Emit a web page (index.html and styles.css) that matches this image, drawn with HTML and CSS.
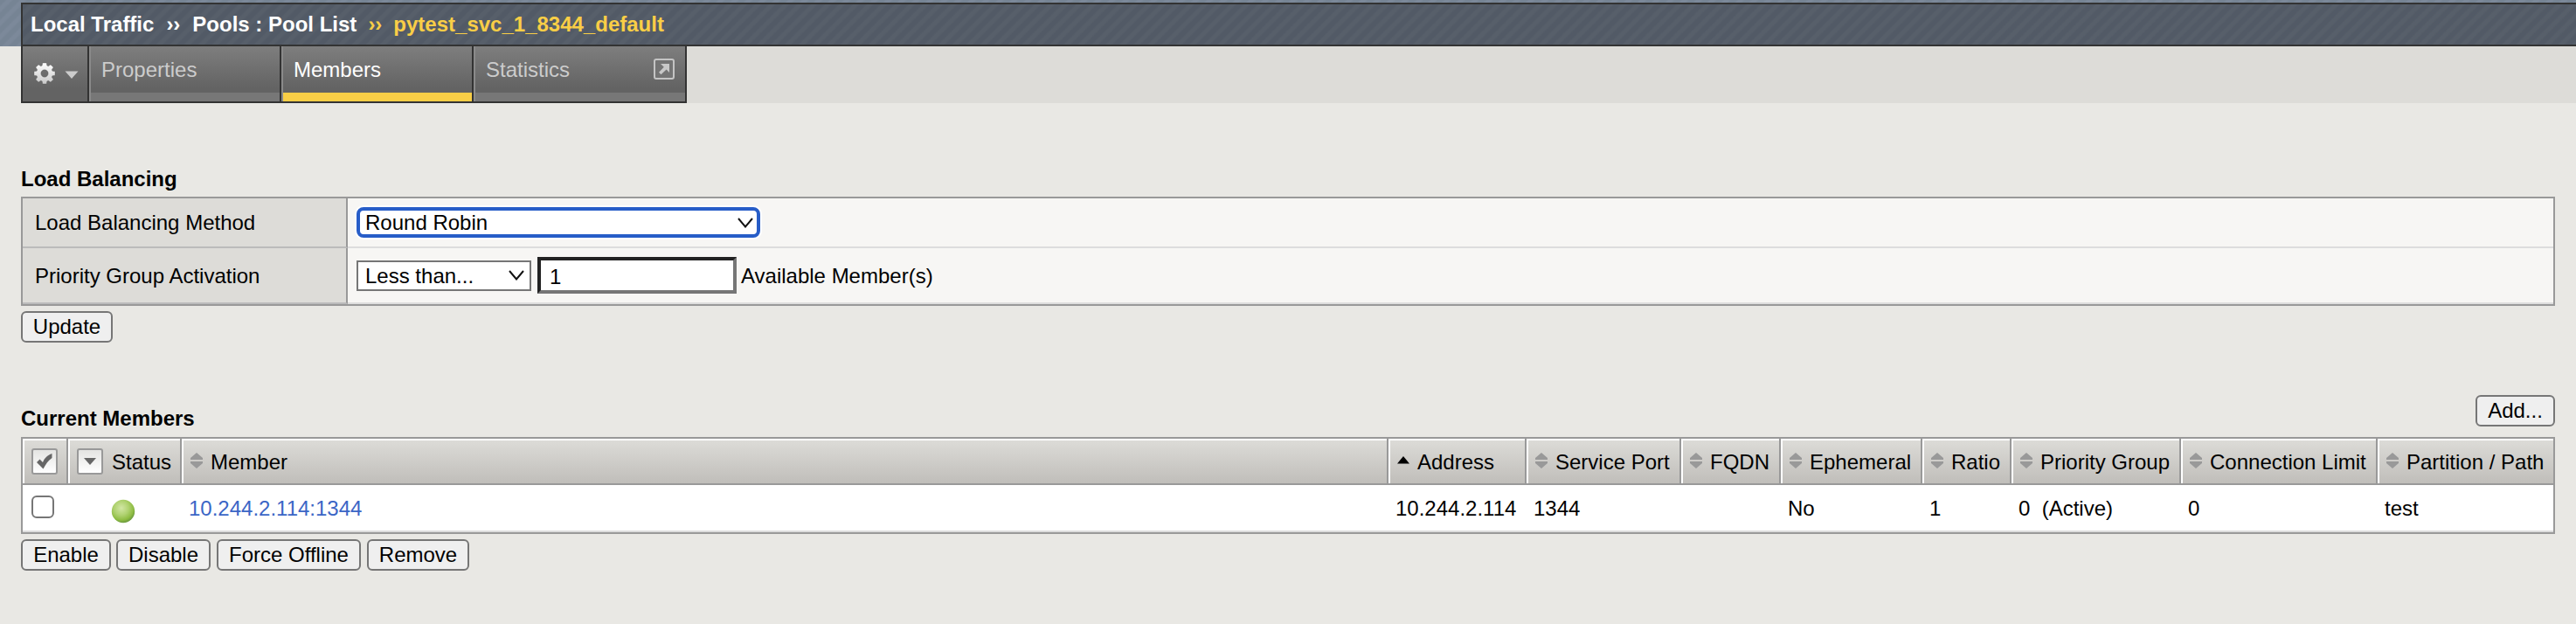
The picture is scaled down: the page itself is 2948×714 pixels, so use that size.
FILE: index.html
```html
<!DOCTYPE html>
<html lang="en">
<head>
<meta charset="utf-8">
<title>Pool Members</title>
<link rel="stylesheet" href="styles.css">
</head>
<body>
<svg width="0" height="0" class="defs" aria-hidden="true">
  <defs>
    <linearGradient id="gearFill" x1="0" y1="0" x2="0" y2="1"><stop offset="0" stop-color="#fff"/><stop offset="1" stop-color="#c8c8c8"/></linearGradient>
    <radialGradient id="ball" cx=".42" cy=".36" r=".62"><stop offset="0" stop-color="#d2e6a4"/><stop offset=".5" stop-color="#b0d271"/><stop offset=".85" stop-color="#8ebc42"/><stop offset="1" stop-color="#72a040"/></radialGradient>
    <symbol id="sort" viewBox="0 0 14 18"><path d="M7 0L14 6V8H0V6ZM0 10H14V12L7 18L0 12Z" fill="#999"/></symbol>
  </defs>
</svg>
<header class="top">
  <div class="crumbs">
    <span>Local Traffic</span><span class="sep">››</span><span>Pools : Pool List</span><span class="sep gold sep2">››</span><span class="gold">pytest_svc_1_8344_default</span>
  </div>
</header>
<nav class="menu">
  <div class="tab gear">
    <svg width="28" height="28" viewBox="-14 -14 28 28"><g fill="url(#gearFill)" stroke="#555" stroke-opacity=".5" stroke-width=".6"><path fill-rule="evenodd" d="M-2.2-12H2.2L2.8-8.9L4.3-8.3L6.9-10.1L10.1-6.9L8.3-4.3L8.9-2.8L12-2.2V2.2L8.9 2.8L8.3 4.3L10.1 6.9L6.9 10.1L4.3 8.3L2.8 8.9L2.2 12H-2.2L-2.8 8.9L-4.3 8.3L-6.9 10.1L-10.1 6.9L-8.3 4.3L-8.9 2.8L-12 2.2V-2.2L-8.9-2.8L-8.3-4.3L-10.1-6.9L-6.9-10.1L-4.3-8.3L-2.8-8.9ZM0-4.2A4.2 4.2 0 1 0 0 4.2A4.2 4.2 0 1 0 0-4.2Z"/></g></svg>
    <svg class="drop" width="16" height="10" viewBox="0 0 16 10"><path d="M.5.5H15.5L8 9Z" fill="#ccc"/></svg>
  </div>
  <div class="tab wide">Properties</div>
  <div class="tab wide active">Members</div>
  <div class="tab stats">Statistics
    <svg width="24" height="24" viewBox="0 0 24 24"><rect x="1" y="1" width="22" height="22" rx="2" fill="#747474" stroke="#c4c4c4" stroke-width="2"/><path d="M8 6H18V16L14.6 12.6L8.5 18.3L6 15.8L11.8 9.8Z" fill="#c8c8c8"/></svg>
  </div>
</nav>
<main>
  <h2>Load Balancing</h2>
  <section class="form">
    <div class="label r1">Load Balancing Method</div>
    <div class="value r1"><div class="select focus"><span>Round Robin</span><svg width="18" height="12" viewBox="0 0 18 12"><path d="M1 1L9 10.5L17 1" fill="none" stroke="#111" stroke-width="2"/></svg></div></div>
    <div class="label r2">Priority Group Activation</div>
    <div class="value r2"><div class="select less"><span>Less than...</span><svg width="18" height="12" viewBox="0 0 18 12"><path d="M1 1L9 10.5L17 1" fill="none" stroke="#111" stroke-width="2"/></svg></div><div class="input">1</div><span class="avail">Available Member(s)</span></div>
  </section>
  <button class="update">Update</button>
  <div class="listhead"><h2>Current Members</h2><button class="add">Add...</button></div>
  <section class="list">
    <div class="row head">
      <div class="check"><span class="box"><svg width="20" height="20" viewBox="0 0 20 20"><path d="M1 11L4.5 7.5L8 11C10 6 13 3 18.5 1V6C14 9 11.500 13 8.500 18.500Z" fill="#666"/></svg></span></div>
      <div class="check"><span class="box"><svg width="14" height="8" viewBox="0 0 14 8"><path d="M0 0H14L7 8Z" fill="#666"/></svg></span><span class="status">Status</span></div>
      <div><svg><use href="#sort"/></svg>Member</div>
      <div><svg viewBox="0 0 14 18"><path d="M7 4L14 12.500H0Z" fill="#000"/></svg>Address</div>
      <div><svg><use href="#sort"/></svg>Service Port</div>
      <div><svg><use href="#sort"/></svg>FQDN</div>
      <div><svg><use href="#sort"/></svg>Ephemeral</div>
      <div><svg><use href="#sort"/></svg>Ratio</div>
      <div><svg><use href="#sort"/></svg>Priority Group</div>
      <div><svg><use href="#sort"/></svg>Connection Limit</div>
      <div><svg><use href="#sort"/></svg>Partition / Path</div>
    </div>
    <div class="row body">
      <div class="tick"><i class="cb"></i></div>
      <div class="ball"><svg width="28" height="28" viewBox="0 0 28 28"><circle cx="14" cy="14" r="13.200" fill="url(#ball)"/></svg></div>
      <div class="link">10.244.2.114:1344</div>
      <div>10.244.2.114</div>
      <div>1344</div>
      <div></div>
      <div>No</div>
      <div>1</div>
      <div>0&nbsp; (Active)</div>
      <div>0</div>
      <div>test</div>
    </div>
  </section>
  <div class="actions"><button class="b1">Enable</button><button class="b2">Disable</button><button class="b3">Force Offline</button><button class="b4">Remove</button></div>
</main>
</body>
</html>
```
FILE: styles.css
```css
* { box-sizing: border-box; }
body { margin: 0; background: #e9e8e4; font: 24px/28px "Liberation Sans", Arial, sans-serif; color: #000; white-space: nowrap; }
.defs { position: absolute; }
.top { height: 53px; padding: 3px 0 0 24px; background: repeating-linear-gradient(135deg, #768494 0 4px, #7c899a 6px 9px, #768494 11.3px); }
.crumbs { height: 50px; display: flex; align-items: center; border: 2px solid #333; border-right: 0; padding: 0 0 1px 9px; background: repeating-linear-gradient(135deg, #525a66 0 4px, #575f6a 6px 9px, #525a66 11.3px); color: #fff; font-weight: bold; }
.sep { margin: 0 14px; }
.sep2 { margin: 0 13px 0 13px; }
.gold { color: #f9ce46; }
.menu { height: 65px; padding-left: 24px; display: flex; background: linear-gradient(90deg, #e9e8e4 24px, #dddcd8 24px); }
.tab { border: solid #333; border-width: 0 2px 2px 0; background: linear-gradient(#7e7e7e, #636363 48px, #636363 53px, #777 53px); color: #ccc; box-shadow: inset 2px 0 #8a8a8a; padding: 13px 0 0 14px; }
.gear { width: 78px; border-left-width: 2px; background: linear-gradient(#7e7e7e, #636363 48px); box-shadow: none; display: flex; padding: 17px 0 0 11px; }
.drop { margin: 11px 0 0 9px; }
.wide { width: 220px; }
.active { color: #fff; background: linear-gradient(#7e7e7e, #636363 48px, #636363 53px, #f9ce46 53px); }
.stats { width: 244px; display: flex; justify-content: space-between; padding-right: 12px; }
.stats svg { margin-top: 1px; }
main { padding: 73px 24px 0; }
h2 { margin: 0; font-size: 24px; line-height: 28px; }
.form { margin-top: 6px; display: grid; grid-template-columns: 372px 1fr; height: 125px; grid-template-rows: 57px 64px; border: 2px solid #999; }
.label { background: #dddcd8; padding-left: 14px; border-right: 2px solid #999; border-bottom: 2px solid #bbb; display: flex; align-items: center; }
.label.r2 { padding-top: 1px; }
.value { background: #f7f6f4; border-bottom: 2px solid #ddd; display: flex; align-items: center; padding-left: 10px; }
.select { background: #fff; height: 35px; display: flex; align-items: center; justify-content: space-between; }
.focus { width: 462px; border: 4px solid #275dc8; border-radius: 8px; box-shadow: 0 0 0 2px #fff; padding: 0 4px 0 6px; }
.less { width: 200px; border: 2px solid #767676; padding: 0 6px 0 8px; }
.r2 .select span, .avail { padding-top: 1px; }
.input { margin: 0 5px 0 7px; width: 228px; height: 42px; background: #fff; border: 4px solid; border-color: #222 #767676 #767676 #222; padding: 5px 0 0 10px; }
button { height: 36px; padding: 0; border: 2px solid #767676; border-radius: 6px; background: #efefef; font: 24px/28px "Liberation Sans", Arial, sans-serif; color: #000; }
.update { display: block; width: 105px; margin-top: 6px; }
.listhead { display: flex; justify-content: space-between; align-items: flex-end; margin-top: 60px; height: 42px; }
.listhead h2 { margin-bottom: 1px; }
.add { width: 91px; margin-bottom: 6px; }
.list { margin-top: 6px; border: 2px solid #999; height: 111px; }
.row { display: grid; grid-template-columns: 52px 130px 1381px 158px 177px 114px 162px 102px 194px 225px 201px; }
.head > div { height: 53px; display: flex; align-items: center; border-right: 2px solid #999; border-bottom: 2px solid #999; background: linear-gradient(#dddcd8, #c0beba); box-shadow: inset 2px 2px #fff; padding: 3px 0 0 10px; }
.row > div:last-child { border-right: 0; }
.head > div > svg { flex: none; width: 14px; height: 18px; margin: -5px 9px 0 0; }
.head > .check { padding: 0 0 0 10px; }
.box { flex: none; width: 30px; height: 30px; border: 2px solid #999; border-radius: 3px; background: linear-gradient(#e4e4e2, #fff); display: flex; align-items: center; justify-content: center; }
.status { margin: 3px 0 0 10px; }
.body { background: #fff; height: 54px; border-bottom: 2px solid #ddd; }
.body > div { padding: 13px 0 0 8px; }
.link { color: #3b66c6; }
.cb { display: block; width: 26px; height: 26px; border: 2px solid #767676; border-radius: 6px; background: #fff; margin: -1px 0 0 2px; }
.body > .ball { padding: 16px 0 0 49px; }
.ball svg { display: block; }
.actions { display: flex; margin-top: 6px; }
.b1 { width: 103px; } .b2 { width: 108px; margin-left: 6px; } .b3 { width: 165px; margin-left: 7px; } .b4 { width: 117px; margin-left: 7px; }
```
